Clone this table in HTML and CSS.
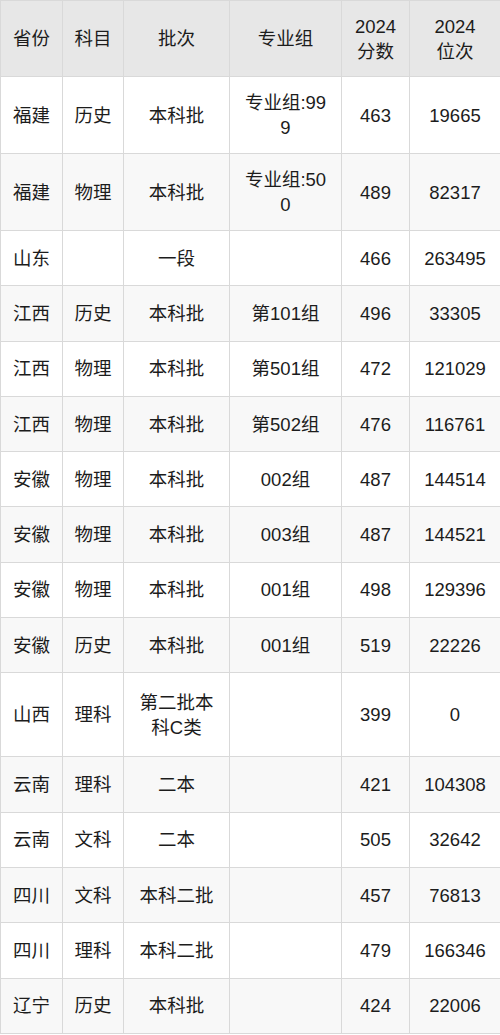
FILE: index.html
```html
<!DOCTYPE html>
<html lang="zh">
<head>
<meta charset="utf-8">
<link rel="stylesheet" href="styles.css">
</head>
<body>
<table class="grid">
  <colgroup>
    <col class="c1"><col class="c2"><col class="c3"><col class="c4"><col class="c5"><col class="c6">
  </colgroup>
  <thead>
    <tr><th>省份</th><th>科目</th><th>批次</th><th>专业组</th><th>2024<br>分数</th><th>2024<br>位次</th></tr>
  </thead>
  <tbody>
    <tr class="tall"><td>福建</td><td>历史</td><td>本科批</td><td>专业组:999</td><td>463</td><td>19665</td></tr>
    <tr class="tall"><td>福建</td><td>物理</td><td>本科批</td><td>专业组:500</td><td>489</td><td>82317</td></tr>
    <tr><td>山东</td><td></td><td>一段</td><td></td><td>466</td><td>263495</td></tr>
    <tr><td>江西</td><td>历史</td><td>本科批</td><td>第101组</td><td>496</td><td>33305</td></tr>
    <tr><td>江西</td><td>物理</td><td>本科批</td><td>第501组</td><td>472</td><td>121029</td></tr>
    <tr><td>江西</td><td>物理</td><td>本科批</td><td>第502组</td><td>476</td><td>116761</td></tr>
    <tr><td>安徽</td><td>物理</td><td>本科批</td><td>002组</td><td>487</td><td>144514</td></tr>
    <tr><td>安徽</td><td>物理</td><td>本科批</td><td>003组</td><td>487</td><td>144521</td></tr>
    <tr><td>安徽</td><td>物理</td><td>本科批</td><td>001组</td><td>498</td><td>129396</td></tr>
    <tr><td>安徽</td><td>历史</td><td>本科批</td><td>001组</td><td>519</td><td>22226</td></tr>
    <tr class="xtall"><td>山西</td><td>理科</td><td>第二批本科C类</td><td></td><td>399</td><td>0</td></tr>
    <tr><td>云南</td><td>理科</td><td>二本</td><td></td><td>421</td><td>104308</td></tr>
    <tr><td>云南</td><td>文科</td><td>二本</td><td></td><td>505</td><td>32642</td></tr>
    <tr><td>四川</td><td>文科</td><td>本科二批</td><td></td><td>457</td><td>76813</td></tr>
    <tr><td>四川</td><td>理科</td><td>本科二批</td><td></td><td>479</td><td>166346</td></tr>
    <tr><td>辽宁</td><td>历史</td><td>本科批</td><td></td><td>424</td><td>22006</td></tr>
  </tbody>
</table>
</body>
</html>
```

FILE: styles.css
```css
html, body {
  margin: 0;
  padding: 0;
  background: #ffffff;
}
.grid {
  width: 500px;
  border-collapse: collapse;
  table-layout: fixed;
  font-family: "Liberation Sans", "Noto Sans CJK SC", sans-serif;
  font-size: 18.5px;
  color: #1c1c1c;
}
.c1 { width: 62px; }
.c2 { width: 61px; }
.c3 { width: 106px; }
.c4 { width: 112px; }
.c5 { width: 68px; }
.c6 { width: 91px; }
.grid th, .grid td {
  border: 1.5px solid #d9d9d9;
  text-align: center;
  vertical-align: middle;
  padding: 0 8px;
  line-height: 25px;
  word-break: break-all;
  font-weight: normal;
}
.grid th:nth-child(4), .grid td:nth-child(4) {
  padding: 0 13px;
}
.grid th {
  background: #e7e7e7;
  height: 75px;
}
.grid tbody tr:nth-child(even) td {
  background: #f8f8f8;
}
.grid td {
  height: 54.3px;
}
.grid tr.tall td {
  height: 76px;
}
.grid tr.xtall td {
  height: 83px;
}
```
